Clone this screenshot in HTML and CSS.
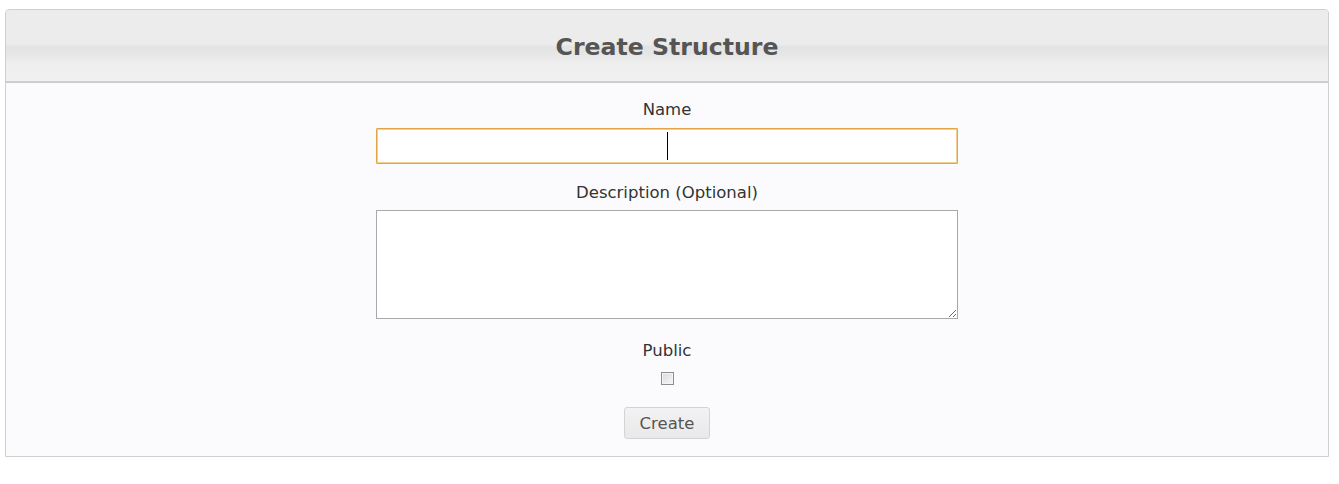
FILE: index.html
```html
<!DOCTYPE html>
<html>
<head>
<meta charset="utf-8">
<link rel="stylesheet" href="styles.css">
</head>
<body>
<div class="panel">
  <div class="panel-header"><h1>Create Structure</h1></div>
  <form class="panel-body">
    <label class="lbl">Name</label>
    <div class="field-wrap">
      <input type="text" class="name-input">
      <span class="caret"></span>
    </div>
    <label class="lbl lbl-desc">Description (Optional)</label>
    <textarea class="desc"></textarea>
    <label class="lbl lbl-public">Public</label>
    <input type="checkbox" class="chk">
    <button type="button" class="btn">Create</button>
  </form>
</div>
</body>
</html>
```
FILE: styles.css
```css
html, body { background: #ffffff; }
body {
  margin: 9px 10px 0 5px;
  font-family: "DejaVu Sans", Verdana, sans-serif;
  color: #333;
}
.panel {
  border: 1px solid #cfcfcf;
  border-radius: 4px 4px 0 0;
  background: #fbfbfd;
}
.panel-header {
  height: 71px;
  border-bottom: 2px solid #cdcdcd;
  border-radius: 4px 4px 0 0;
  background: linear-gradient(to bottom, #ececec 0, #ececec 34px, #e3e3e3 37px, #e6e6e6 44px, #efefef 54px, #f0f0f0 71px);
  display: flex;
  align-items: center;
  justify-content: center;
}
.panel-header h1 {
  margin: 0;
  font-size: 23.6px;
  font-weight: bold;
  color: #555;
  padding-top: 3px;
}
.panel-body {
  display: flex;
  flex-direction: column;
  align-items: center;
  padding: 17px 0 17px;
}
.lbl {
  font-size: 16.5px;
  line-height: 18px;
  padding-top: 1px;
  color: #333;
}
.field-wrap {
  position: relative;
  margin-top: 9px;
}
.name-input {
  display: block;
  box-sizing: border-box;
  width: 582px;
  height: 36px;
  margin: 0;
  border: 1px solid #e2a445;
  box-shadow: 0 0 0 1px #f2cf8f inset;
  border-radius: 1px;
  background: #fff;
  outline: none;
}
.caret {
  position: absolute;
  left: 291px;
  top: 4px;
  width: 1px;
  height: 28px;
  background: #000;
}
.lbl-desc { margin-top: 19px; }
.desc {
  display: block;
  box-sizing: border-box;
  width: 582px;
  height: 109px;
  margin: 8px 0 0;
  border: 1px solid #a9a9a9;
  background: #fff;
  resize: both;
}
.lbl-public { margin-top: 22px; }
.chk {
  appearance: none;
  -webkit-appearance: none;
  box-sizing: border-box;
  width: 13px;
  height: 13px;
  margin: 12px 0 0;
  border: 1px solid #8e8e8e;
  box-shadow: inset 0 0 0 1px #f4f4f4;
  background: linear-gradient(135deg, #d8dade, #f6f6f7);
}
.btn {
  margin-top: 22px;
  width: 86px;
  height: 32px;
  border: 1px solid #d4d4d4;
  border-radius: 3px;
  background: linear-gradient(to bottom, #f2f2f2, #e9e9e9);
  color: #555;
  font-family: "DejaVu Sans", Verdana, sans-serif;
  font-size: 16.5px;
  padding: 0;
}
```
